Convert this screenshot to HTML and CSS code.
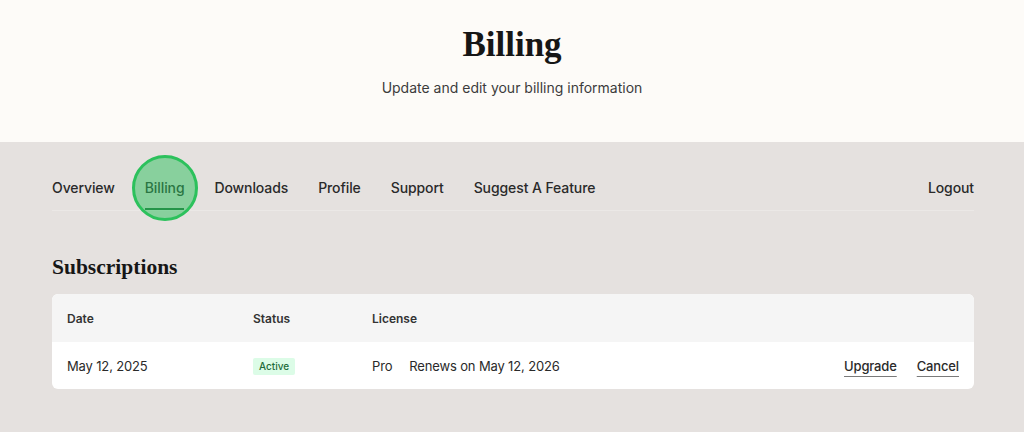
FILE: index.html
```html
<!DOCTYPE html>
<html lang="en">
<head>
<meta charset="utf-8">
<title>Billing</title>
<link rel="stylesheet" href="styles.css">
</head>
<body>
<header class="hero">
  <h1 class="hero-title">Billing</h1>
  <p class="hero-sub">Update and edit your billing information</p>
</header>
<main class="wrap">
  <nav class="tabs">
    <a class="tab">Overview</a>
    <a class="tab tab-active">Billing<span class="ring"></span></a>
    <a class="tab">Downloads</a>
    <a class="tab">Profile</a>
    <a class="tab">Support</a>
    <a class="tab">Suggest A Feature</a>
    <a class="tab tab-logout">Logout</a>
  </nav>
  <h2 class="section-title">Subscriptions</h2>
  <div class="table">
    <div class="row row-head">
      <div class="cell">Date</div>
      <div class="cell">Status</div>
      <div class="cell">License</div>
      <div class="cell"></div>
    </div>
    <div class="row row-body">
      <div class="cell">May 12, 2025</div>
      <div class="cell"><span class="badge">Active</span></div>
      <div class="cell license"><span>Pro</span><span>Renews on May 12, 2026</span></div>
      <div class="cell actions"><a class="action">Upgrade</a><a class="action">Cancel</a></div>
    </div>
  </div>
</main>
</body>
</html>
```
FILE: styles.css
```css
* { box-sizing: border-box; }
html, body { margin: 0; padding: 0; }
body {
  background: #e5e1df;
  font-family: Inter, "Noto Sans", sans-serif;
  color: #262626;
  height: 432px;
  overflow: hidden;
}
.hero {
  background: #fdfbf8;
  height: 142px;
  padding-top: 25px;
  text-align: center;
}
.hero-title {
  margin: 0;
  font-family: "Liberation Serif", "DejaVu Serif", serif;
  font-weight: 700;
  font-size: 35px;
  line-height: 40px;
  color: #161616;
}
.hero-sub {
  margin: 13px 0 0;
  font-size: 14px;
  line-height: 20px;
  color: #3c3c3c;
}
.wrap {
  margin: 0 50px 0 52px;
  padding-top: 24px;
}
.tabs {
  display: flex;
  gap: 30px;
  border-bottom: 1px solid #ebe8e6;
}
.tab {
  position: relative;
  font-size: 14px;
  font-weight: 500;
  letter-spacing: -0.1px;
  line-height: 20px;
  padding: 12px 0 10px;
  border-bottom: 2px solid transparent;
  color: #2a2a2a;
}
.tab-active { border-bottom-color: #1f6b37; }
.tab-logout { margin-left: auto; }
.ring {
  position: absolute;
  left: 50%;
  top: 22px;
  width: 66px;
  height: 66px;
  margin: -33px 0 0 -33px;
  border-radius: 50%;
  border: 3px solid #2cc15c;
  background: rgba(44, 192, 92, 0.5);
}
.section-title {
  margin: 43px 0 14px;
  font-family: "Liberation Serif", "DejaVu Serif", serif;
  font-weight: 700;
  font-size: 21.5px;
  line-height: 26px;
  color: #161616;
}
.table {
  background: #fff;
  border-radius: 6px;
  overflow: hidden;
}
.row {
  display: grid;
  grid-template-columns: 186px 119px 1fr auto;
  align-items: center;
  padding: 0 15px;
}
.row-head {
  background: #f5f5f5;
  height: 48px;
  font-size: 12px;
  font-weight: 600;
  color: #333;
}
.row-body {
  height: 47px;
  font-size: 13px;
  letter-spacing: -0.15px;
  color: #2a2a2a;
}
.badge {
  display: inline-block;
  background: #dcfce7;
  color: #1d6b3a;
  font-size: 10px;
  font-weight: 500;
  letter-spacing: 0;
  line-height: 17px;
  padding: 0 6px;
  border-radius: 2px;
}
.license { display: flex; gap: 17px; }
.actions { display: flex; gap: 20px; }
.action {
  font-weight: 500;
  color: #2a2a2a;
  text-decoration: underline;
  text-decoration-color: #7a7a7a;
  text-underline-offset: 5px;
  text-decoration-thickness: 1px;
}
```
